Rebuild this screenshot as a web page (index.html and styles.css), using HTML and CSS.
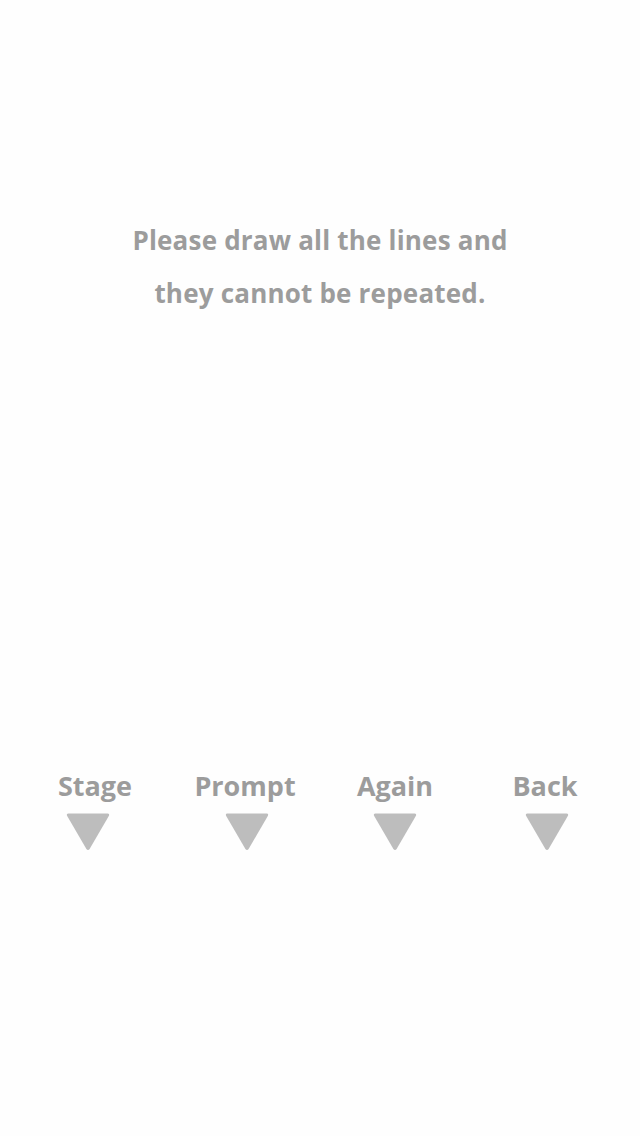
FILE: index.html
```html
<!DOCTYPE html>
<html lang="en">
<head>
    <meta charset="UTF-8">
    <meta name="viewport" content="width=device-width, initial-scale=1.0">
    <title>Lines</title>
    <link rel="stylesheet" href="styles.css">
</head>
<body>
    <div class="hint">
        <p>Please draw all the lines and</p>
        <p>they cannot be repeated.</p>
    </div>
    <div class="menu">
        <div class="menu-item stage">
            <span class="label">Stage</span>
            <svg class="arrow" width="44" height="38" viewBox="0 0 44 38"><path d="M2.5 0.5 H41.5 Q44 0.5 42.8 3 L23.6 36 Q22 38 20.4 36 L1.2 3 Q0 0.5 2.5 0.5 Z" fill="#bdbdbd"/></svg>
        </div>
        <div class="menu-item prompt">
            <span class="label">Prompt</span>
            <svg class="arrow" width="44" height="38" viewBox="0 0 44 38"><path d="M2.5 0.5 H41.5 Q44 0.5 42.8 3 L23.6 36 Q22 38 20.4 36 L1.2 3 Q0 0.5 2.5 0.5 Z" fill="#bdbdbd"/></svg>
        </div>
        <div class="menu-item again">
            <span class="label">Again</span>
            <svg class="arrow" width="44" height="38" viewBox="0 0 44 38"><path d="M2.5 0.5 H41.5 Q44 0.5 42.8 3 L23.6 36 Q22 38 20.4 36 L1.2 3 Q0 0.5 2.5 0.5 Z" fill="#bdbdbd"/></svg>
        </div>
        <div class="menu-item back">
            <span class="label">Back</span>
            <svg class="arrow" width="44" height="38" viewBox="0 0 44 38"><path d="M2.5 0.5 H41.5 Q44 0.5 42.8 3 L23.6 36 Q22 38 20.4 36 L1.2 3 Q0 0.5 2.5 0.5 Z" fill="#bdbdbd"/></svg>
        </div>
    </div>
</body>
</html>
```

FILE: styles.css
```css
body {
    margin: 0;
    width: 640px;
    height: 1136px;
    background-color: #fefefe;
    font-family: "Open Sans", "Lato", sans-serif;
    font-weight: 700;
    color: #9c9c9c;
}
.hint {
    padding-top: 214px;
    text-align: center;
    font-size: 26px;
    line-height: 53px;
    letter-spacing: 0.2px;
}
.hint p {
    margin: 0;
}
.menu {
    display: grid;
    grid-template-columns: repeat(4, 150px);
    justify-content: center;
    margin-top: 451px;
}
.menu-item {
    display: flex;
    flex-direction: column;
    align-items: center;
}
.label {
    font-size: 27px;
    line-height: 30px;
}
.arrow {
    display: block;
    margin-top: 12px;
}
.stage .arrow {
    margin-right: 14px;
}
.prompt .arrow,
.back .arrow {
    margin-left: 3px;
}
```
